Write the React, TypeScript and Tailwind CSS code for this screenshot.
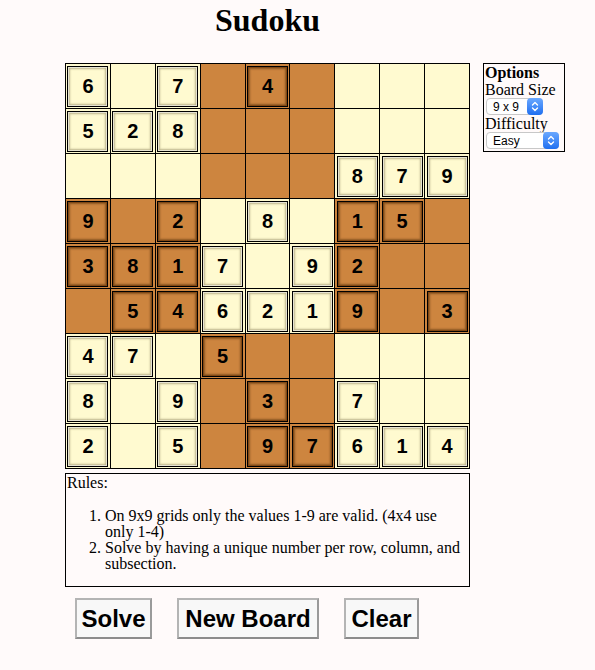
import React from 'react';

// 0 = empty cell
const board = [
  [6, 0, 7, 0, 4, 0, 0, 0, 0],
  [5, 2, 8, 0, 0, 0, 0, 0, 0],
  [0, 0, 0, 0, 0, 0, 8, 7, 9],
  [9, 0, 2, 0, 8, 0, 1, 5, 0],
  [3, 8, 1, 7, 0, 9, 2, 0, 0],
  [0, 5, 4, 6, 2, 1, 9, 0, 3],
  [4, 7, 0, 5, 0, 0, 0, 0, 0],
  [8, 0, 9, 0, 3, 0, 7, 0, 0],
  [2, 0, 5, 0, 9, 7, 6, 1, 4],
];

function FakeSelect({ label, width }: { label: string; width: string }) {
  return (
    <div
      className={`flex items-center h-[17px] ${width} ml-[2px] rounded-[4px] bg-white border border-[#c8c8c8] font-['Liberation_Sans',Arial,sans-serif] text-[12px] text-black leading-none`}
    >
      <span className="flex-1 pl-[6px]">{label}</span>
      <span className="flex flex-col items-center justify-center h-[17px] w-[16px] -mr-px rounded-[4px] bg-gradient-to-b from-[#6aa8ff] to-[#1d6ff0]">
        <svg width="8" height="11" viewBox="0 0 8 11" fill="none" stroke="white" strokeWidth="1.4" strokeLinecap="round" strokeLinejoin="round">
          <path d="M1.5 4 L4 1.5 L6.5 4" />
          <path d="M1.5 7 L4 9.5 L6.5 7" />
        </svg>
      </span>
    </div>
  );
}

export default function App() {
  return (
    <div className="min-h-[670px] w-[595px] bg-[#fffafa] font-['Liberation_Serif','Times_New_Roman',serif] text-black">
      <div className="flex items-start pl-[65px]">
        {/* Board column */}
        <div className="w-[405px] flex flex-col">
          <h1 className="h-[63px] pt-[2px] text-center text-[32px] leading-[37px] font-bold">Sudoku</h1>

          <div className="grid grid-cols-9 gap-px bg-black border border-black">
            {board.map((row, r) =>
              row.map((v, c) => {
                const dark = (Math.floor(r / 3) + Math.floor(c / 3)) % 2 === 1;
                return (
                  <div
                    key={`${r}-${c}`}
                    className={`h-[44px] flex items-center justify-center ${dark ? 'bg-[#cd853f]' : 'bg-[#fffad0]'}`}
                  >
                    {v !== 0 && (
                      <div
                        className={`w-[41px] h-[41px] flex items-center justify-center border border-black font-['Liberation_Sans',Arial,sans-serif] font-bold text-[20px] leading-none ${
                          dark
                            ? 'bg-[#cd853f] shadow-[inset_0_0_0_1px_rgba(120,60,10,0.6),inset_0_0_2px_2px_rgba(60,30,0,0.45)]'
                            : 'bg-[#fffad0] shadow-[inset_0_0_0_1px_rgba(255,255,255,0.6),inset_0_0_2px_2px_rgba(90,80,40,0.4)]'
                        }`}
                      >
                        {v}
                      </div>
                    )}
                  </div>
                );
              })
            )}
          </div>

          {/* Rules */}
          <div className="mt-[4px] h-[114px] border border-black text-[16px] leading-[16px]">
            <div className="pl-px pt-px">Rules:</div>
            <ol className="mt-[17px] pl-[39px] pr-[4px] list-decimal">
              <li>On 9x9 grids only the values 1-9 are valid. (4x4 use only 1-4)</li>
              <li>Solve by having a unique number per row, column, and subsection.</li>
            </ol>
          </div>

          {/* Buttons */}
          <div className="mt-[11px] flex items-center pl-[10px] gap-[25px] font-['Liberation_Sans',Arial,sans-serif]">
            <button className="h-[41px] w-[77px] bg-[#f8f8f8] border-2 border-[#b4b4b4] border-r-[#9a9a9a] border-b-[#8c8c8c] text-[24px] font-bold leading-none">
              Solve
            </button>
            <button className="h-[41px] w-[142px] bg-[#f8f8f8] border-2 border-[#b4b4b4] border-r-[#9a9a9a] border-b-[#8c8c8c] text-[24px] font-bold leading-none">
              New Board
            </button>
            <button className="h-[41px] w-[75px] bg-[#f8f8f8] border-2 border-[#b4b4b4] border-r-[#9a9a9a] border-b-[#8c8c8c] text-[24px] font-bold leading-none">
              Clear
            </button>
          </div>
        </div>

        {/* Options */}
        <div className="ml-[13px] mt-[63px] w-[82px] h-[89px] border border-black text-[16px] leading-[17px] flex flex-col">
          <div className="font-bold pl-px">Options</div>
          <div className="pl-px">Board Size</div>
          <FakeSelect label="9 x 9" width="w-[57px]" />
          <div className="pl-px">Difficulty</div>
          <FakeSelect label="Easy" width="w-[73px]" />
        </div>
      </div>
    </div>
  );
}
